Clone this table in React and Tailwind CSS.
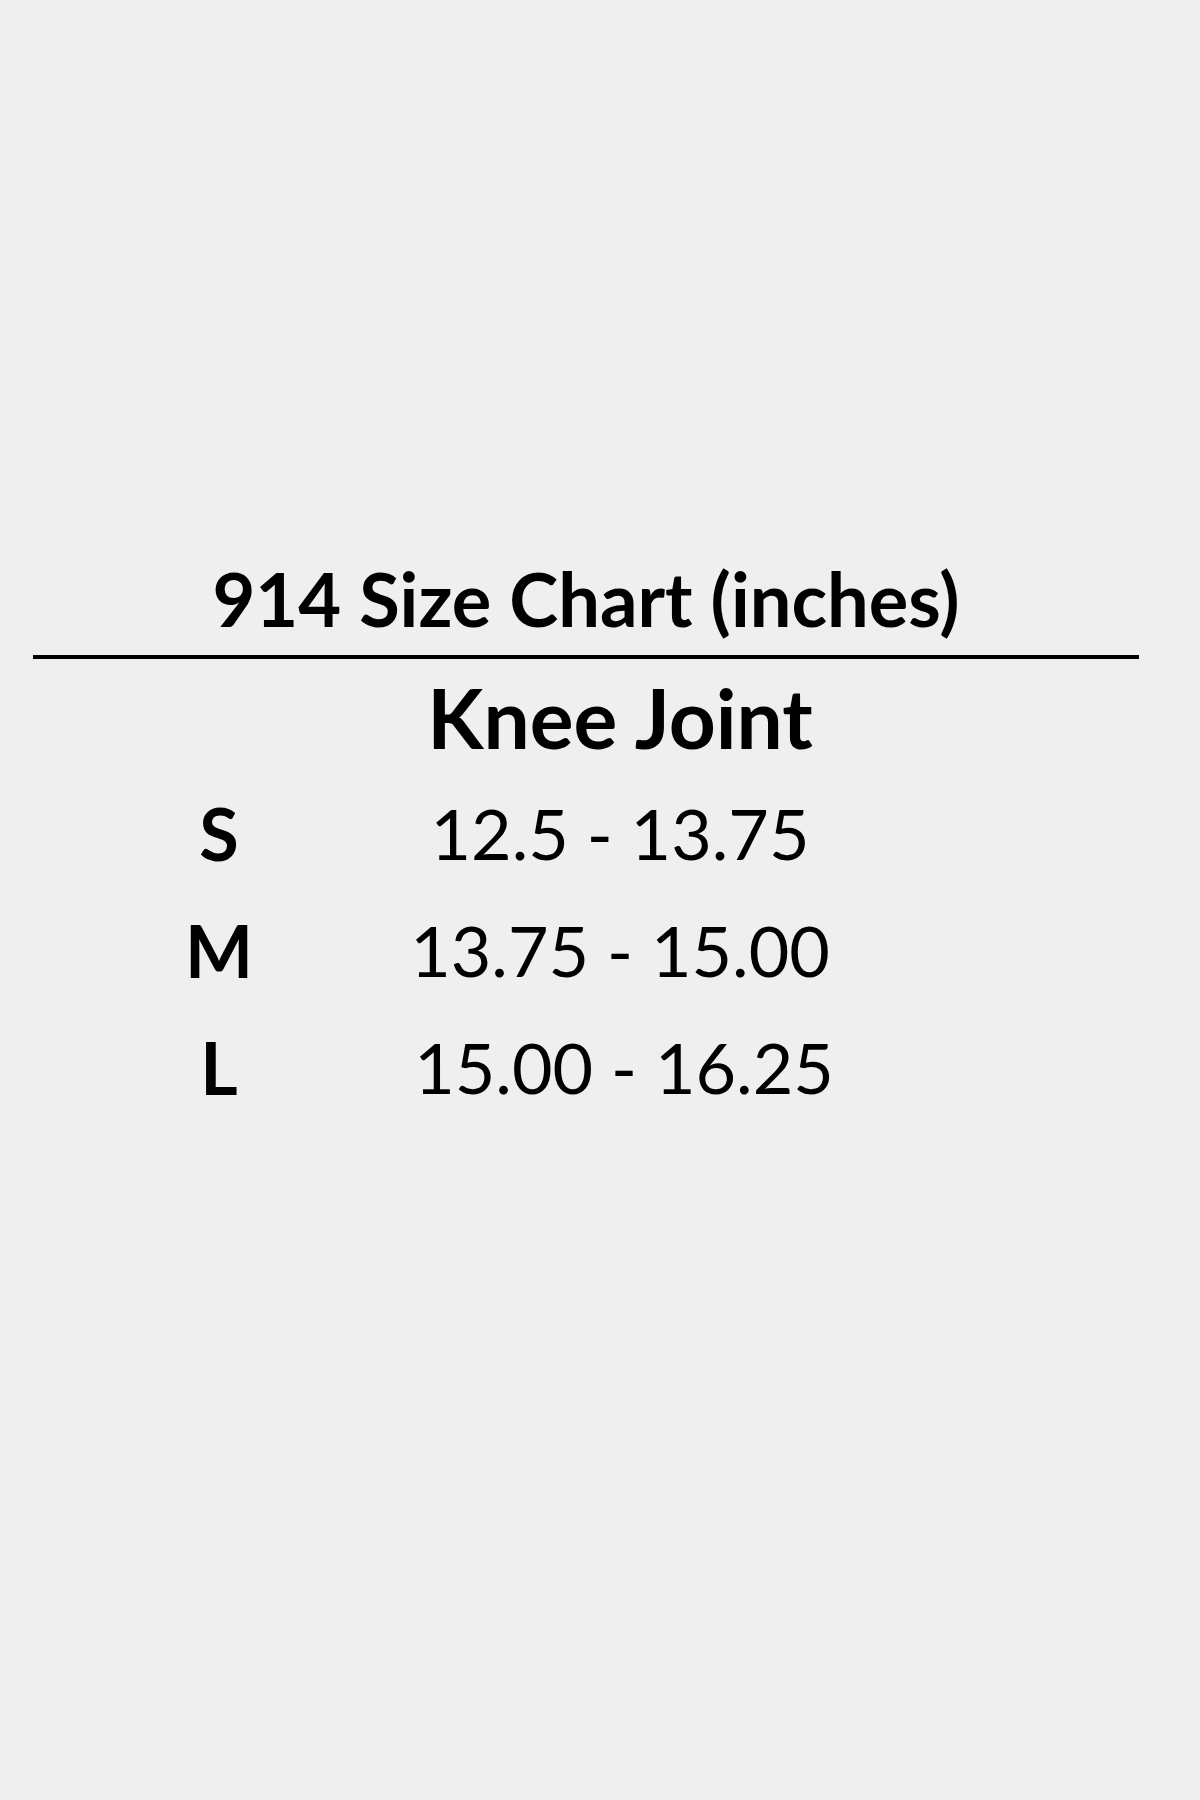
const rows = [
  { size: "S", range: "12.5 - 13.75", shift: "" },
  { size: "M", range: "13.75 - 15.00", shift: "" },
  { size: "L", range: "15.00 - 16.25", shift: "pl-[8px]" },
]

function App() {
  return (
    <div className="w-[1200px] h-[1800px] bg-[#efefef] text-black font-['Lato',sans-serif]">
      <div className="pt-[562px]">
        <h1 className="w-[1172px] text-center font-bold text-[74px] leading-[74px]">914 Size Chart (inches)</h1>
        <div className="ml-[33px] mt-[19px] w-[1106px] h-[4px] bg-black"></div>
        <div className="grid grid-cols-[200px_602px] ml-[119px] mt-[17px]">
          <div></div>
          <div className="text-center font-bold text-[82px] leading-[82px] mb-[17px]">Knee Joint</div>
          {rows.map(row => (
            <div key={row.size} className="contents">
              <div className="text-center font-bold text-[72px] leading-[117px]">{row.size}</div>
              <div className={`text-center text-[70px] leading-[117px] ${row.shift}`}>{row.range}</div>
            </div>
          ))}
        </div>
      </div>
    </div>
  )
}

export default App
